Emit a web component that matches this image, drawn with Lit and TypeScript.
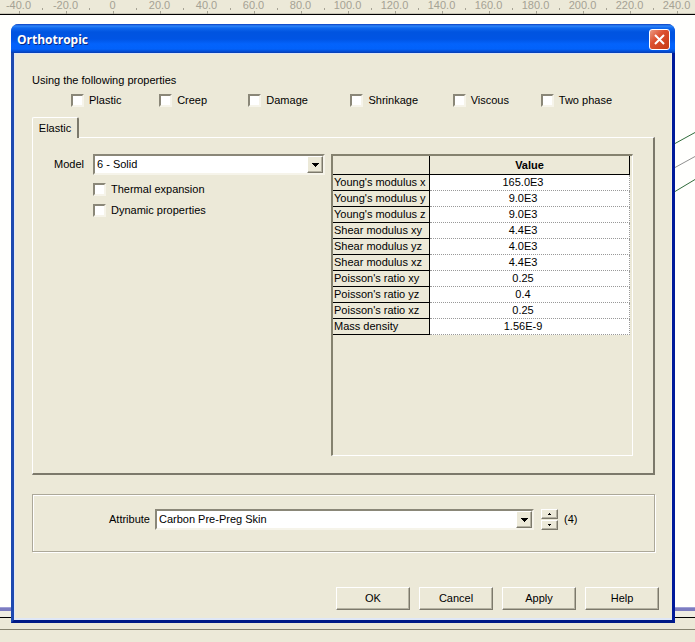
import { LitElement, html, css, svg } from "lit";
import { customElement, state } from "lit/decorators.js";

const RULER = ["-40.0", "-20.0", "0", "20.0", "40.0", "60.0", "80.0", "100.0", "120.0", "140.0", "160.0", "180.0", "200.0", "220.0", "240.0"];
const OPTIONS = ["Plastic", "Creep", "Damage", "Shrinkage", "Viscous", "Two phase"];
const ROWS: [string, string][] = [
  ["Young's modulus x", "165.0E3"],
  ["Young's modulus y", "9.0E3"],
  ["Young's modulus z", "9.0E3"],
  ["Shear modulus xy", "4.4E3"],
  ["Shear modulus yz", "4.0E3"],
  ["Shear modulus xz", "4.4E3"],
  ["Poisson's ratio xy", "0.25"],
  ["Poisson's ratio yz", "0.4"],
  ["Poisson's ratio xz", "0.25"],
  ["Mass density", "1.56E-9"],
];

const down = svg`<path d="M0 0h7v1h-1v1h-1v1h-1v1h-1v-1h-1v-1h-1v-1h-1z" fill="#000"/>`;

@customElement("app-root")
export class AppRoot extends LitElement {
  @state() private index = 4;

  static styles = css`
    :host {
      display: grid;
      min-height: 100vh;
      overflow: hidden;
      background: #ece9d8;
      color: #000;
      font: 11px/13px "Liberation Sans", Arial, sans-serif;
    }
    * { box-sizing: border-box; }
    button, select, input { font: inherit; color: inherit; margin: 0; border-radius: 0; }

    .backdrop, .dialog { grid-area: 1 / 1; min-width: 0; }
    .backdrop { display: flex; flex-direction: column; overflow: hidden; }
    .ruler {
      display: flex;
      height: 15px;
      margin-left: -5px;
      flex: none;
      color: #a5a294;
      border-bottom: 1px solid #000;
      box-shadow: inset 0 -1px #c9c6b8;
      line-height: 11px;
    }
    .mark {
      flex: none;
      width: 47px;
      text-align: center;
      background:
        linear-gradient(#a5a294, #a5a294) 24px 11px / 1px 3px no-repeat,
        linear-gradient(#a5a294, #a5a294) 0 8px / 1px 2px no-repeat;
    }
    .canvas { flex: 1; background: #fffffd; display: flex; justify-content: flex-end; padding-top: 117px; }
    .edge { height: 4px; background: #7c7cc0; border-top: 1px solid #a0a0d4; }
    .strip { height: 7px; background: #efede2; border-bottom: 1px solid #000; }
    .status { height: 12px; border-bottom: 1px solid #85826f; }
    .foot { height: 12px; }

    .dialog {
      margin: 24px 20px 19px 11px;
      display: flex;
      flex-direction: column;
      border: 3px solid;
      border-color: #0453e0 #001a9a #001a86 #1c49b0;
      border-top: 0;
      border-radius: 8px 8px 0 0;
      background: #ece9d8;
    }
    .title {
      height: 29px;
      margin: 0 -3px;
      padding: 2px 5px 0 6px;
      display: flex;
      align-items: center;
      justify-content: space-between;
      border-radius: 7px 7px 0 0;
      background: linear-gradient(#0a3ec0 0, #2f86f8 2px, #0f68ee 4px, #0054e0 8px, #0054e4 15px, #0363fc 20px, #0262fb 25px, #0448c8 28px, #0a3cae 29px);
      color: #fff;
    }
    .title h1 { margin: 0; font: bold 12px/16px "Open Sans", "Noto Sans", sans-serif; text-shadow: 1px 1px #0a2a86; }
    .close {
      width: 21px;
      height: 21px;
      padding: 0;
      display: grid;
      place-items: center;
      border: 1px solid #fff;
      border-radius: 3px;
      background: linear-gradient(135deg, #eb9a83, #dc5030 40%, #c63c16);
    }
    .body {
      flex: 1;
      padding: 20px 17px 0 18px;
      box-shadow: inset 1px 0 #dfe7f6, inset 0 1px #dfe7f6, inset -1px 0 #f3f0e4;
    }
    .intro { margin: 0 0 7px; line-height: 14px; }
    .options { display: grid; grid-template-columns: 88fr 89fr 102fr 102fr 88fr 114fr; padding-left: 39px; }
    .check { display: flex; align-items: center; gap: 5px; height: 13px; line-height: 15px; white-space: nowrap; }
    .check input, .sunken {
      background: #fff;
      border: 2px solid;
      border-color: #8a8778 #f6f4ea #f6f4ea #8a8778;
    }
    .check input { appearance: none; width: 13px; height: 13px; flex: none; }

    .tab {
      position: relative;
      display: block;
      width: 47px;
      height: 21px;
      margin: 10px 0 -1px;
      padding: 0;
      text-align: center;
      background: #ece9d8;
      border: 1px solid #fff;
      border-right: 2px solid #7c796b;
      border-bottom: 0;
      border-radius: 2px 2px 0 0;
    }
    .panel {
      display: grid;
      grid-template-columns: minmax(0, 271fr) minmax(0, 302fr);
      gap: 6px;
      padding: 16px 20px 17px 21px;
      border: 1px solid #fff;
      border-right: 2px solid #7c796b;
      border-bottom: 2px solid #7c796b;
    }
    .model { display: grid; grid-template-columns: 39px 1fr; align-content: start; align-items: center; row-gap: 8px; }
    .model .check { grid-column: 2; }
    .combo { position: relative; display: flex; height: 21px; min-width: 0; }
    .combo select { appearance: none; flex: 1; min-width: 0; padding: 0 20px 0 2px; }
    .arrow {
      position: absolute;
      top: 2px;
      right: 2px;
      bottom: 2px;
      width: 16px;
      display: grid;
      place-items: center;
      pointer-events: none;
    }
    .raised {
      background: #ece9d8;
      border: 1px solid;
      border-color: #fff #7c796b #7c796b #fff;
      box-shadow: inset -1px -1px #b5b2a2;
    }

    .sheet {
      min-height: 302px;
      padding-right: 2px;
      border: 2px solid #85826f;
      border-right: 1px solid #fff;
      border-bottom: 1px solid #fff;
    }
    table { width: 100%; table-layout: fixed; border-collapse: separate; border-spacing: 0; }
    th, td { padding: 0 1px; height: 16px; line-height: 15px; white-space: nowrap; text-align: center; }
    th { background: #ece9d8; border-right: 1px solid #000; border-bottom: 1px solid #000; }
    thead th { height: 19px; line-height: 18px; }
    .names { width: 97px; }
    tbody th { font-weight: normal; text-align: left; }
    td { background: #fff; border-right: 1px dotted #999; border-bottom: 1px dotted #999; padding-right: 14px; }

    .group {
      display: flex;
      align-items: center;
      margin-top: 19px;
      padding: 14px 76px 21px 76px;
      border: 1px solid #aca899;
      box-shadow: 1px 1px #fff, inset 1px 1px #fff;
    }
    .group .combo { flex: 1; margin: 0 7px 0 5px; }
    .spin { width: 17px; display: grid; gap: 1px; margin-right: 6px; }
    .spin button { height: 10px; padding: 0; display: grid; place-items: center; }
    .count { width: 14px; }

    .actions {
      display: flex;
      justify-content: flex-end;
      gap: 9px;
      padding: 35px 13px 10px 18px;
      box-shadow: inset 1px 0 #dfe7f6, inset 0 -2px #dfe7f6;
    }
    .actions button { width: 74px; height: 23px; padding: 0; }
    svg { display: block; }
  `;

  private check(label: string) {
    return html`<label class="check"><input type="checkbox" />${label}</label>`;
  }

  private arrow() {
    return html`<span class="arrow raised"><svg width="7" height="4">${down}</svg></span>`;
  }

  render() {
    return html`
      <div class="backdrop">
        <div class="ruler">${RULER.map((n) => html`<span class="mark">${n}</span>`)}</div>
        <div class="canvas">
          <svg width="20" height="62" fill="none">
            <path d="M0 11.5L20 .5M0 59.5L20 47.5" stroke="#2f6b3a" />
            <path d="M0 35.5L20 24.5" stroke="#909090" />
          </svg>
        </div>
        <div class="edge"></div>
        <div class="strip"></div>
        <div class="status"></div>
        <div class="foot"></div>
      </div>
      <section class="dialog" role="dialog" aria-labelledby="title">
        <header class="title">
          <h1 id="title">Orthotropic</h1>
          <button class="close" aria-label="Close">
            <svg width="13" height="13"><path d="M2 2l9 9M11 2l-9 9" stroke="#fff" stroke-width="2" /></svg>
          </button>
        </header>
        <div class="body">
          <p class="intro">Using the following properties</p>
          <div class="options">${OPTIONS.map((o) => this.check(o))}</div>
          <button class="tab" role="tab" aria-selected="true">Elastic</button>
          <div class="panel" role="tabpanel">
            <div class="model">
              <label for="model">Model</label>
              <div class="combo">
                <select id="model" class="sunken"><option>6 - Solid</option></select>
                ${this.arrow()}
              </div>
              ${this.check("Thermal expansion")} ${this.check("Dynamic properties")}
            </div>
            <div class="sheet">
              <table>
                <thead>
                  <tr><th class="names"></th><th scope="col">Value</th></tr>
                </thead>
                <tbody>
                  ${ROWS.map(([k, v]) => html`<tr><th scope="row">${k}</th><td>${v}</td></tr>`)}
                </tbody>
              </table>
            </div>
          </div>
          <div class="group">
            <label for="attribute">Attribute</label>
            <div class="combo">
              <select id="attribute" class="sunken"><option>Carbon Pre-Preg Skin</option></select>
              ${this.arrow()}
            </div>
            <div class="spin">
              <button class="raised" aria-label="Next" @click=${() => this.index++}>
                <svg width="3" height="2"><path d="M1 0h1v1h1v1h-3v-1h1z" /></svg>
              </button>
              <button class="raised" aria-label="Previous" @click=${() => this.index--}>
                <svg width="3" height="2"><path d="M0 0h3v1h-1v1h-1v-1h-1z" /></svg>
              </button>
            </div>
            <span class="count">(${this.index})</span>
          </div>
        </div>
        <footer class="actions">
          ${["OK", "Cancel", "Apply", "Help"].map((b) => html`<button class="raised">${b}</button>`)}
        </footer>
      </section>
    `;
  }
}
